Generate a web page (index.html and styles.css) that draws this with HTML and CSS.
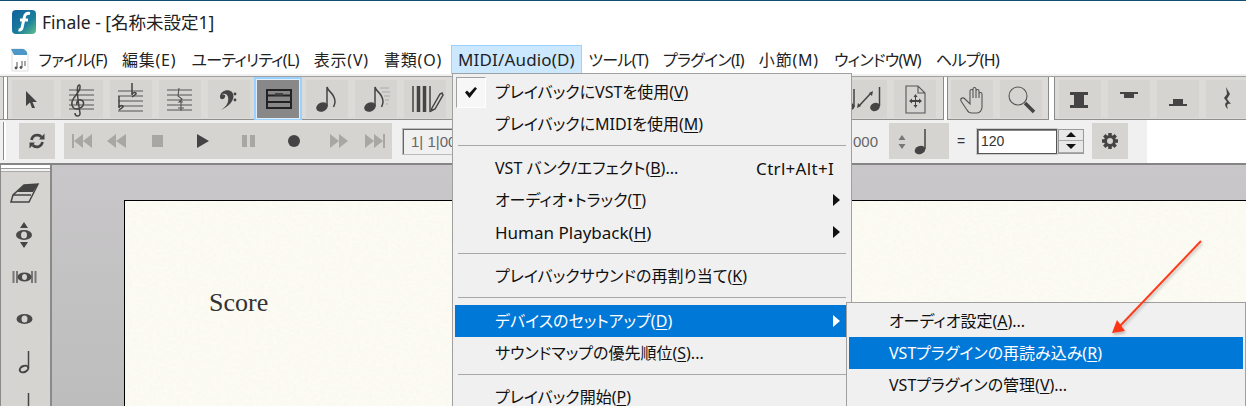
FILE: index.html
```html
<!DOCTYPE html>
<html lang="ja">
<head>
<meta charset="utf-8">
<title>Finale</title>
<link rel="stylesheet" href="styles.css">
</head>
<body>
<div class="window">
  <header class="titlebar">
    <svg class="app-logo" viewBox="0 0 24 24" width="24" height="24">
      <defs><linearGradient id="lg" x1="0" y1="0" x2="1" y2="1"><stop offset="0" stop-color="#0f5f9c"/><stop offset=".6" stop-color="#1b7f9c"/><stop offset="1" stop-color="#63c08a"/></linearGradient></defs>
      <rect width="24" height="24" rx="4" fill="url(#lg)"/>
      <path d="M18 3.500c-3.500-.8-5 .8-5.600 3.500l-2.300 10.500c-.4 1.800-1.400 2.800-3.600 2.500M8 10h8" fill="none" stroke="#fff" stroke-width="3"/>
    </svg>
    <span>Finale - [名称未設定1]</span>
  </header>

  <nav class="menubar">
    <svg class="doc-icon" viewBox="0 0 18 24" width="18" height="24">
      <path d="M1 1h11l5 5v17H1z" fill="#fff" stroke="#ddd"/>
      <path d="M0 1h13l3 3v3H3z" fill="#4e97c9"/>
      <path d="M6 14v6M11 13v6M14 13v5" stroke="#555" fill="none"/><circle cx="5" cy="20" r="1.4" fill="#555"/><circle cx="10" cy="19.500" r="1.400" fill="#555"/>
    </svg>
    <span class="menu-top kana">ファイル(F)</span>
    <span class="menu-top kanji">編集(E)</span>
    <span class="menu-top kana">ユーティリティ(L)</span>
    <span class="menu-top kanji">表示(V)</span>
    <span class="menu-top kanji">書類(O)</span>
    <span class="menu-top open">MIDI/Audio(D)</span>
    <span class="menu-top kana">ツール(T)</span>
    <span class="menu-top kana">プラグイン(I)</span>
    <span class="menu-top kanji">小節(M)</span>
    <span class="menu-top kana">ウィンドウ(W)</span>
    <span class="menu-top kana">ヘルプ(H)</span>
  </nav>

  <div class="toolbar tools">
    <i class="handle"></i>
    <div class="tool"><svg viewBox="0 0 42 38"><path class="ink" d="M14 11l11 11h-4.500l2.500 6h-3l-2-5.500-4 3.500z"/></svg></div>
    <div class="tool"><svg viewBox="0 0 42 38"><path class="staff" d="M8 10h25M8 15h25M8 20h25M8 25h25M8 29h25"/><path class="line" d="M19 28c-5 3-9-1-8-6 1-5 7-9 8-14 .5-3-1-4-2-2-2 3 1 21 2 27 .5 4-5 4-5 0M19 28c4-1 5-7 1-8-3-1-5 2-4 5"/></svg></div>
    <div class="tool"><svg viewBox="0 0 42 38"><path class="staff" d="M8 11h25M8 16h25M8 21h25M8 26h25M8 31h25"/><path class="line" d="M22 3v12c0-3 5-3 4-1-1 1-4 3-4 3M9 16v12c0-3 5-3 4-1-1 1-4 3-4 3"/></svg></div>
    <div class="tool"><svg viewBox="0 0 42 38"><path class="staff" d="M8 10h25M8 15h25M8 20h25M8 25h25M8 30h25"/><path class="thin" d="M20 8l-1 8 4 3-3 3h4M22 20v11M19 28h6"/></svg></div>
    <div class="tool"><svg viewBox="0 0 42 38"><path class="ink" d="M12 17c0-6 8-9 12-5 4 5 0 13-11 18 6-4 8-8 7-13-1-4-5-4-6-2 2-1 4 0 3 2-1 3-5 3-5 0z"/><circle class="ink" cx="27" cy="14" r="1.400"/><circle class="ink" cx="27" cy="20" r="1.400"/></svg></div>
    <div class="tool selected"><svg viewBox="0 0 42 38"><path class="measure" d="M10 10h24v18H10z"/><path class="measure" d="M10 15.500h24M10 22h24"/><path class="ink" d="M18 13h8v2.500h-8z"/></svg></div>
    <div class="tool"><svg viewBox="0 0 42 38"><ellipse class="ink" cx="16" cy="27" rx="6" ry="4.500" transform="rotate(-22 16 27)"/><path class="line" d="M21 26V7c1 5 8 6 8 15 0 2-1 4-1.500 5"/></svg></div>
    <div class="tool"><svg viewBox="0 0 42 38"><ellipse class="ink" cx="15" cy="27" rx="6" ry="4.500" transform="rotate(-22 15 27)"/><path class="line" d="M20 26V7c1 5 8 6 8 15 0 2-1 4-1.500 5"/><path class="fade" d="M25 8h9M27 12h8M29 16h6M30 20h4M31 24h2"/></svg></div>
    <div class="tool"><svg viewBox="0 0 42 38"><path class="line" d="M9 6v26M26 6v26"/><path class="thick" d="M14.500 6v26M20.500 6v26"/><path class="line" d="M28 28l8-14 2-1 1 2-8 14-4 2z"/></svg></div>
    <div class="tool"></div><div class="tool"></div><div class="tool"></div><div class="tool"></div>
    <div class="tool"></div><div class="tool"></div><div class="tool"></div><div class="tool"></div>
    <div class="tool"><svg viewBox="0 0 42 38"><ellipse class="ink" cx="5" cy="27" rx="4.500" ry="3.500" transform="rotate(-22 5 27)"/><path class="line" d="M9 27V9"/><ellipse class="ink" cx="30" cy="27" rx="5" ry="4" transform="rotate(-22 30 27)"/><path class="line" d="M34.500 26V7M14 26l12-13"/><path class="ink" d="M12 28l1-5 3 3zM28 11l-1 5-3-3z"/></svg></div>
    <div class="tool"><svg viewBox="0 0 42 38"><path class="thin" d="M12 6h12l7 7v20H12zM24 6v7h7"/><path class="ink" d="M21.500 14l2 3h-1.500v3h3v-1.500l3 2.500-3 2.500V22h-3v3h1.500l-2 3-2-3H21v-3h-3v1.500L15 21l3-2.500V20h3v-3h-1.500z"/></svg></div>
    <i class="handle gap"></i>
    <div class="tool"><svg viewBox="0 0 42 38"><path class="thin" d="M10 21l6 9c1 2 3 3 5 3h5c3 0 5-3 5-6V14c0-2-3-2-3 0v4-7c0-2-3-2-3 0v7-9c0-2-3-2-3 0v9-7c0-2-3-2-3 0v13l-5-5c-2-2-5-1-4 2z"/></svg></div>
    <div class="tool"><svg viewBox="0 0 42 38"><circle class="thin" cx="18" cy="16" r="9"/><path class="thick" d="M25 23l9 9"/></svg></div>
    <i class="handle gap wide"></i>
    <div class="tool"><svg viewBox="0 0 42 38"><path class="ink" d="M11 12h18v3h-4v10h4v3H11v-3h4V15h-4z"/></svg></div>
    <div class="tool"><svg viewBox="0 0 42 38"><path class="ink" d="M12 12h18v2h-4v4H16v-4h-4z"/></svg></div>
    <div class="tool"><svg viewBox="0 0 42 38"><path class="ink" d="M16 19h10v5h4v2H12v-2h4z"/></svg></div>
    <div class="tool"><svg viewBox="0 0 42 38"><path class="ink" d="M20 7l4 7-3 5 4 5c-3-1-5 0-3 5-3-2-4-6-1-7l-3-4 3-4z"/></svg></div>
  </div>

  <div class="toolbar playback">
    <div class="inner">
      <i class="handle short"></i>
      <div class="pbtn sync"><svg viewBox="0 0 36 36"><path class="syncline" d="M12.500 17a5.800 5.800 0 0 1 10-3M23.500 19a5.800 5.800 0 0 1-10 3"/><path class="ink" d="M20 16.500l5.500-6v6zM16 19.500l-5.500 6v-6z"/></svg></div>
      <div class="pbtn transport"><svg viewBox="0 0 328 36" width="328" height="36">
        <path class="dim" d="M8 11h2v14H8zM10 18l9-7v14zM19 18l9-7v14z"/>
        <path class="dim" d="M43 18l9-7v14zM52 18l10-7v14z"/>
        <path class="dim" d="M88 12h11v12H88z"/>
        <path class="ink" d="M133 11v14l12-7z"/>
        <path class="dim" d="M178 12h5v12h-5zM186 12h5v12h-5z"/>
        <circle class="ink" cx="230" cy="18" r="6"/>
        <path class="dim" d="M266 11l9 7-9 7zM275 11l9 7-9 7z"/>
        <path class="dim" d="M301 11l9 7-9 7zM310 11l9 7-9 7zM319 11h2v14h-2z"/>
      </svg></div>
      <div class="counter"><span class="count-l">1| 1|00</span><span class="count-r">1.000</span></div>
      <div class="pbtn tempo-note"><svg viewBox="0 0 60 36" width="60" height="36"><path class="dim2" d="M13 12l-3.500 5h7zM13 26l-3.500-5h7z"/><ellipse class="ink" cx="31" cy="27" rx="5.500" ry="4" transform="rotate(-22 31 27)"/><path class="line" d="M36 26V6"/></svg></div>
      <span class="equals">=</span>
      <div class="tempo-input">120</div>
      <div class="spinner"><span class="spin"><i class="up"></i></span><span class="spin"><i class="down"></i></span></div>
      <div class="pbtn gear"><svg viewBox="0 0 36 36"><g class="gearteeth"><path d="M18 10v16M10 18h16M12.300 12.300l11.400 11.400M23.700 12.300L12.300 23.700"/></g><circle class="gearbody" cx="18" cy="18" r="4.500"/></svg></div>
    </div>
  </div>

  <div class="workspace">
    <aside class="palette">
      <div class="pal-handle"></div>
      <div class="pal-btn"><svg viewBox="0 0 50 42"><path class="line" d="M11 30l2-7 11-10 14-1-7 14-2 4zM13 23h18"/><path class="ink" d="M24 13l14-1-5 8H17z"/></svg></div>
      <div class="pal-btn"><svg viewBox="0 0 50 42"><path class="ink" d="M24 8l-4 6h8zM24 34l-4-6h8z"/><ellipse class="whole" cx="24" cy="21" rx="8" ry="5"/><ellipse class="hole" cx="24" cy="21" rx="3" ry="3.500"/></svg></div>
      <div class="pal-btn"><svg viewBox="0 0 50 42"><path class="staffd" d="M13.500 15v12M17 15v12M32 15v12M35.500 15v12"/><ellipse class="whole" cx="24.500" cy="21" rx="7" ry="4.500"/><ellipse class="hole" cx="24.500" cy="21" rx="2.500" ry="3"/></svg></div>
      <div class="pal-btn"><svg viewBox="0 0 50 42"><ellipse class="whole" cx="24.500" cy="21" rx="8" ry="5"/><ellipse class="hole" cx="24.500" cy="21" rx="3" ry="3.500"/></svg></div>
      <div class="pal-btn"><svg viewBox="0 0 50 42"><ellipse class="half" cx="24" cy="29" rx="4.500" ry="3" transform="rotate(-25 24 29)"/><path class="line" d="M28.500 28V11"/></svg></div>
      <div class="pal-btn"><svg viewBox="0 0 50 42"><path class="line" d="M28.500 28V11"/></svg></div>
    </aside>
    <main class="canvas">
      <div class="paper">
        <svg class="texture" width="100%" height="100%"><filter id="grain"><feTurbulence type="fractalNoise" baseFrequency=".25 .35" numOctaves="3" seed="4"/><feColorMatrix values="0 0 0 0 .6  0 0 0 0 .57  0 0 0 0 .45  .12 0 0 0 -.03"/></filter><rect width="100%" height="100%" filter="url(#grain)"/></svg>
        <span class="score">Score</span>
      </div>
    </main>
  </div>

  <div class="dropdown main-menu">
    <div class="item"><span class="check"><svg viewBox="0 0 12 11" width="12" height="11"><path d="M0 5.500l2-2 2.500 2.500L10 0l2 1.500L4.500 11z" fill="#111"/></svg></span>プレイバックにVSTを使用(<u>V</u>)</div>
    <div class="item">プレイバックにMIDIを使用(<u>M</u>)</div>
    <div class="sep"></div>
    <div class="item"><span>VST バンク/エフェクト(<u>B</u>)...</span><span class="accel">Ctrl+Alt+I</span></div>
    <div class="item sub"><span>オーディオ・トラック(<u>T</u>)</span></div>
    <div class="item sub"><span class="lat">Human Playback(<u>H</u>)</span></div>
    <div class="sep"></div>
    <div class="item">プレイバックサウンドの再割り当て(<u>K</u>)</div>
    <div class="sep tall"></div>
    <div class="item sub active"><span>デバイスのセットアップ(<u>D</u>)</span></div>
    <div class="item">サウンドマップの優先順位(<u>S</u>)...</div>
    <div class="sep"></div>
    <div class="item">プレイバック開始(<u>P</u>)</div>
  </div>

  <div class="dropdown sub-menu">
    <div class="item">オーディオ設定(<u>A</u>)...</div>
    <div class="item active">VSTプラグインの再読み込み(<u>R</u>)</div>
    <div class="item">VSTプラグインの管理(<u>V</u>)...</div>
    <div class="sep"></div>
  </div>

  <svg class="callout" width="1246" height="406" viewBox="0 0 1246 406">
    <defs><filter id="sh" x="-20%" y="-20%" width="140%" height="140%"><feDropShadow dx="1" dy="2" stdDeviation="1.500" flood-color="#000" flood-opacity=".25"/></filter></defs>
    <g filter="url(#sh)"><path d="M1201 241L1120 326" stroke="#fb3d1e" stroke-width="2" fill="none"/><path d="M1112 333l5-13 8 11z" fill="#fb3514"/></g>
  </svg>
</div>
</body>
</html>
```
FILE: styles.css
```css
* { box-sizing: border-box; }
html, body { margin: 0; padding: 0; background: #fff; }
.window {
  position: relative;
  width: 1246px;
  height: 406px;
  overflow: hidden;
  display: flex;
  flex-direction: column;
  background: #fff;
  color: #111;
  font: 16px/1.2 "Noto Sans", "Noto Sans CJK JP", sans-serif;
  font-feature-settings: "palt";
}
.titlebar {
  height: 45px;
  flex: none;
  border-top: 1px solid #134f72;
  display: flex;
  align-items: center;
  gap: 6px;
  padding: 0 0 2px 12px;
  color: #222;
  font-size: 17.500px;
}
.app-logo { display: block; }
.menubar {
  height: 29px;
  flex: none;
  display: flex;
  align-items: center;
  padding-left: 11px;
  color: #222;
}
.doc-icon { margin-right: 2px; }
.menu-top { padding: 0 7.500px; height: 29px; line-height: 30px; white-space: nowrap; }
.kana { letter-spacing: -.7px; }
.kanji { letter-spacing: .8px; }
.menu-top.open {
  margin: 0 -1px 0 1.500px;
  background: #cce8ff;
  box-shadow: inset 0 0 0 1px #99d1ff;
  font-size: 17px;
  letter-spacing: .15px;
  padding: 0 7px;
}
.toolbar { flex: none; background: #f0f0f0; }
.tools {
  height: 46px;
  padding: 4px 0 2px 12px;
  border-top: 2px solid #f0f0f0;
  background: #dddbd7;
  box-shadow: inset 0 1px 0 #a0a0a0, inset 0 -1px 0 #8f8f8f;
  display: flex;
  gap: 7px;
  align-items: stretch;
  overflow: hidden;
}
.tool { flex: none; width: 42px; background: #d6d4d0; }
.tool svg { display: block; width: 42px; height: 38px; }
.tool.selected { background: #888; box-shadow: 0 0 0 1px #dfeefa, 0 0 0 3px #99d1ff; }
.handle {
  flex: none;
  width: 5px;
  margin: -3px -3px -1px -9px;
  border-left: 1px solid #8a8a8a;
  border-right: 1px solid #8a8a8a;
  background: #fff;
}
.handle.gap { margin: -3px -4px -2px 0; }
.handle.gap.wide { margin: -3px -3px -2px -1px; width: 7px; }
.handle.short { margin: 0 13px 0 3px; width: 3px; border-right: 0; height: 38px; }
.ink { fill: #444; }
.dim { fill: #a9a7a3; }
.dim2 { fill: #777; }
.staff { stroke: #555; stroke-width: 1.200; fill: none; }
.line { stroke: #444; stroke-width: 1.500; fill: none; }
.thin { stroke: #555; stroke-width: 1.100; fill: none; }
.thick { stroke: #444; stroke-width: 3.500; fill: none; }
.fade { stroke: #aaa; stroke-width: 1; fill: none; }
.measure { stroke: #222; stroke-width: 2; fill: none; }
.syncline { stroke: #444; stroke-width: 2.600; fill: none; }
.gearteeth path { stroke: #444; stroke-width: 3.500; fill: none; }
.gearbody { fill: #d6d4d0; stroke: #444; stroke-width: 3; }
.whole { fill: #4a4a4a; }
.hole { fill: #d6d4d0; }
.half { fill: none; stroke: #444; stroke-width: 2; }
.staffd { stroke: #777; stroke-width: 2; fill: none; }

.playback {
  width: 1147px;
  height: 43px;
}
.inner {
  display: flex;
  align-items: center;
  height: 43px;
  padding-bottom: 1px;
}
.pbtn { flex: none; height: 36px; background: #d6d4d0; }
.pbtn svg { display: block; }
.sync { width: 36px; margin-right: 9px; }
.sync svg, .gear svg { width: 36px; height: 36px; }
.transport { width: 328px; margin-right: 10px; }
.counter {
  flex: none;
  width: 478px;
  margin-right: 9px;
  display: flex;
  justify-content: space-between;
  align-items: center;
  padding-right: 2px;
  font: 15px "Liberation Sans", sans-serif;
  color: #666;
}
.count-l {
  width: 60px;
  height: 27px;
  line-height: 25px;
  padding-left: 8px;
  white-space: pre;
  border: 1px solid #bbb;
  box-shadow: inset 1px 1px 0 #666;
}
.tempo-note { width: 60px; margin-right: 8px; }
.equals { width: 20px; font: 14px "Liberation Sans", sans-serif; color: #333; }
.tempo-input {
  flex: none;
  width: 80px;
  height: 25px;
  padding: 1px 0 0 3px;
  background: #fff;
  border: 1px solid #555;
  box-shadow: 0 0 0 1px #ccc, inset 1px 1px 0 #888;
  font: 14px/21px "Liberation Sans", sans-serif;
  color: #333;
}
.spinner {
  flex: none;
  width: 26px;
  height: 25px;
  margin: 0 8px 0 1px;
  display: flex;
  flex-direction: column;
  border: 1px solid #999;
  background: #e8e8e8;
}
.spin { flex: 1; display: flex; align-items: center; justify-content: center; border-bottom: 1px solid #aaa; }
.spin i { width: 0; height: 0; border-left: 5px solid transparent; border-right: 5px solid transparent; }
.spin .up { border-bottom: 5px solid #111; }
.spin .down { border-top: 5px solid #111; }
.gear { width: 36px; }

.workspace {
  flex: 1;
  display: flex;
  min-height: 0;
  border-top: 2px solid #858585;
}
.palette {
  flex: none;
  width: 52px;
  border-left: 1px solid #8a8a8a;
  border-right: 2px solid #8a8a8a;
  background: #d6d4d0;
}
.pal-handle { height: 7px; background: #f4f4f4; border-bottom: 1px solid #aaa; box-shadow: inset 0 3px 0 #fff, inset 0 4px 0 #999; }
.pal-btn { height: 42px; }
.pal-btn svg { display: block; width: 50px; height: 42px; margin-left: -1px; }
.canvas {
  flex: 1;
  padding: 35px 0 0 72px;
  background: linear-gradient(#c9c7c9, #bdbdbd);
  min-width: 0;
}
.paper {
  position: relative;
  height: 400px;
  background: #fdfcf4;
  border: 1px solid #000;
  border-right: 0;
  padding: 87px 0 0 84px;
}
.texture { position: absolute; left: 0; top: 0; }
.score {
  position: relative;
  font: 26px/30px "Liberation Serif", serif;
  color: #333;
  font-feature-settings: normal;
}

.dropdown {
  position: absolute;
  background: #f0f0f0;
  border: 1px solid #a0a0a0;
  padding: 2px;
  color: #111;
}
.main-menu { left: 452px; top: 73px; width: 400px; height: 400px; }
.sub-menu { left: 846px; top: 302px; width: 400px; height: 200px; }
.item {
  position: relative;
  height: 32px;
  line-height: 33px;
  padding: 0 18px 0 40px;
  white-space: pre;
}
.lat { font-size: 17px; }
.accel { position: absolute; right: 15px; top: 0; font-size: 17px; letter-spacing: .3px; }
.active { background: #0078d7; color: #fff; }
.sep { height: 12px; padding-top: 5px; }
.sep.tall { height: 13px; }
.sep::before { content: ""; display: block; height: 1px; margin: 0 3px; background: #a8a8a8; }
.sub::after {
  content: "";
  position: absolute;
  right: 9px;
  top: 10px;
  border-left: 7px solid #111;
  border-top: 6px solid transparent;
  border-bottom: 6px solid transparent;
}
.sub.active::after { border-left-color: #fff; }
.check {
  position: absolute;
  left: 1px;
  top: 1px;
  width: 30px;
  height: 31px;
  display: flex;
  align-items: center;
  justify-content: center;
  border: 1px solid #a0a0a0;
  border-right-color: #fff;
  border-bottom-color: #fff;
  background: #f7f7f7;
}
u { text-underline-offset: 2px; text-decoration-thickness: 1px; }
.callout { position: absolute; left: 0; top: 0; pointer-events: none; }
```
